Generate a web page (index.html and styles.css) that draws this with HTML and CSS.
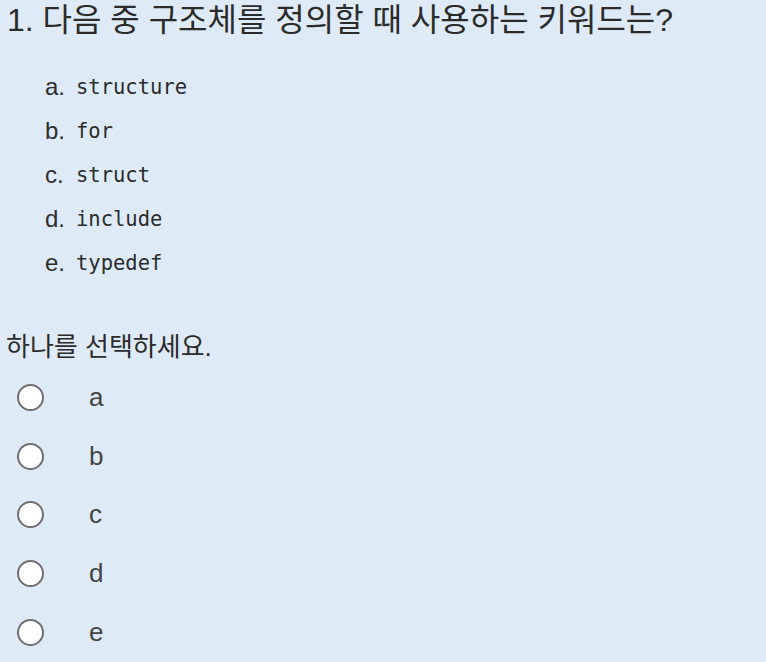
FILE: index.html
```html
<!DOCTYPE html>
<html lang="ko">
<head>
<meta charset="utf-8">
<link rel="stylesheet" href="styles.css">
</head>
<body>
<div class="question">
  <h1 class="qtext">1. 다음 중 구조체를 정의할 때 사용하는 키워드는?</h1>
  <ol class="options">
    <li class="option"><span class="mark">a.</span><code class="code">structure</code></li>
    <li class="option"><span class="mark">b.</span><code class="code">for</code></li>
    <li class="option"><span class="mark">c.</span><code class="code">struct</code></li>
    <li class="option"><span class="mark">d.</span><code class="code">include</code></li>
    <li class="option"><span class="mark">e.</span><code class="code">typedef</code></li>
  </ol>
  <p class="prompt">하나를 선택하세요.</p>
  <div class="answers">
    <label class="answer"><span class="radio"></span><span class="label">a</span></label>
    <label class="answer"><span class="radio"></span><span class="label">b</span></label>
    <label class="answer"><span class="radio"></span><span class="label">c</span></label>
    <label class="answer"><span class="radio"></span><span class="label">d</span></label>
    <label class="answer"><span class="radio"></span><span class="label">e</span></label>
  </div>
</div>
</body>
</html>
```
FILE: styles.css
```css
html, body {
  margin: 0;
  padding: 0;
  background: #deebf7;
}
body {
  width: 766px;
  height: 662px;
  overflow: hidden;
  font-family: "Liberation Sans", "Noto Sans CJK KR", sans-serif;
  color: #333333;
}
.question {
  display: flex;
  flex-direction: column;
  padding: 0 0 0 7px;
}
.qtext {
  margin: 0;
  font-size: 32px;
  font-weight: normal;
  line-height: 40px;
  color: #2b2b2b;
}
.options {
  list-style: none;
  margin: 25px 0 0 0;
  padding: 0 0 0 38px;
  display: flex;
  flex-direction: column;
}
.option {
  height: 44px;
  display: flex;
  align-items: center;
  font-size: 24px;
}
.mark {
  width: 31px;
  color: #2e2e2e;
}
.code {
  font-family: "DejaVu Sans Mono", monospace;
  font-size: 20.5px;
  color: #2b2b2b;
}
.prompt {
  margin: 46px 0 0 -1px;
  font-size: 26px;
  line-height: 32px;
  color: #2b2b2b;
}
.answers {
  display: flex;
  flex-direction: column;
  margin-top: 5px;
}
.answer {
  height: 58.75px;
  display: flex;
  align-items: center;
}
.radio {
  box-sizing: border-box;
  width: 27px;
  height: 27px;
  margin-left: 10px;
  border: 2px solid #6e6e6e;
  border-radius: 50%;
  background: #ffffff;
}
.label {
  margin-left: 45px;
  font-size: 26px;
  color: #444444;
}
```
